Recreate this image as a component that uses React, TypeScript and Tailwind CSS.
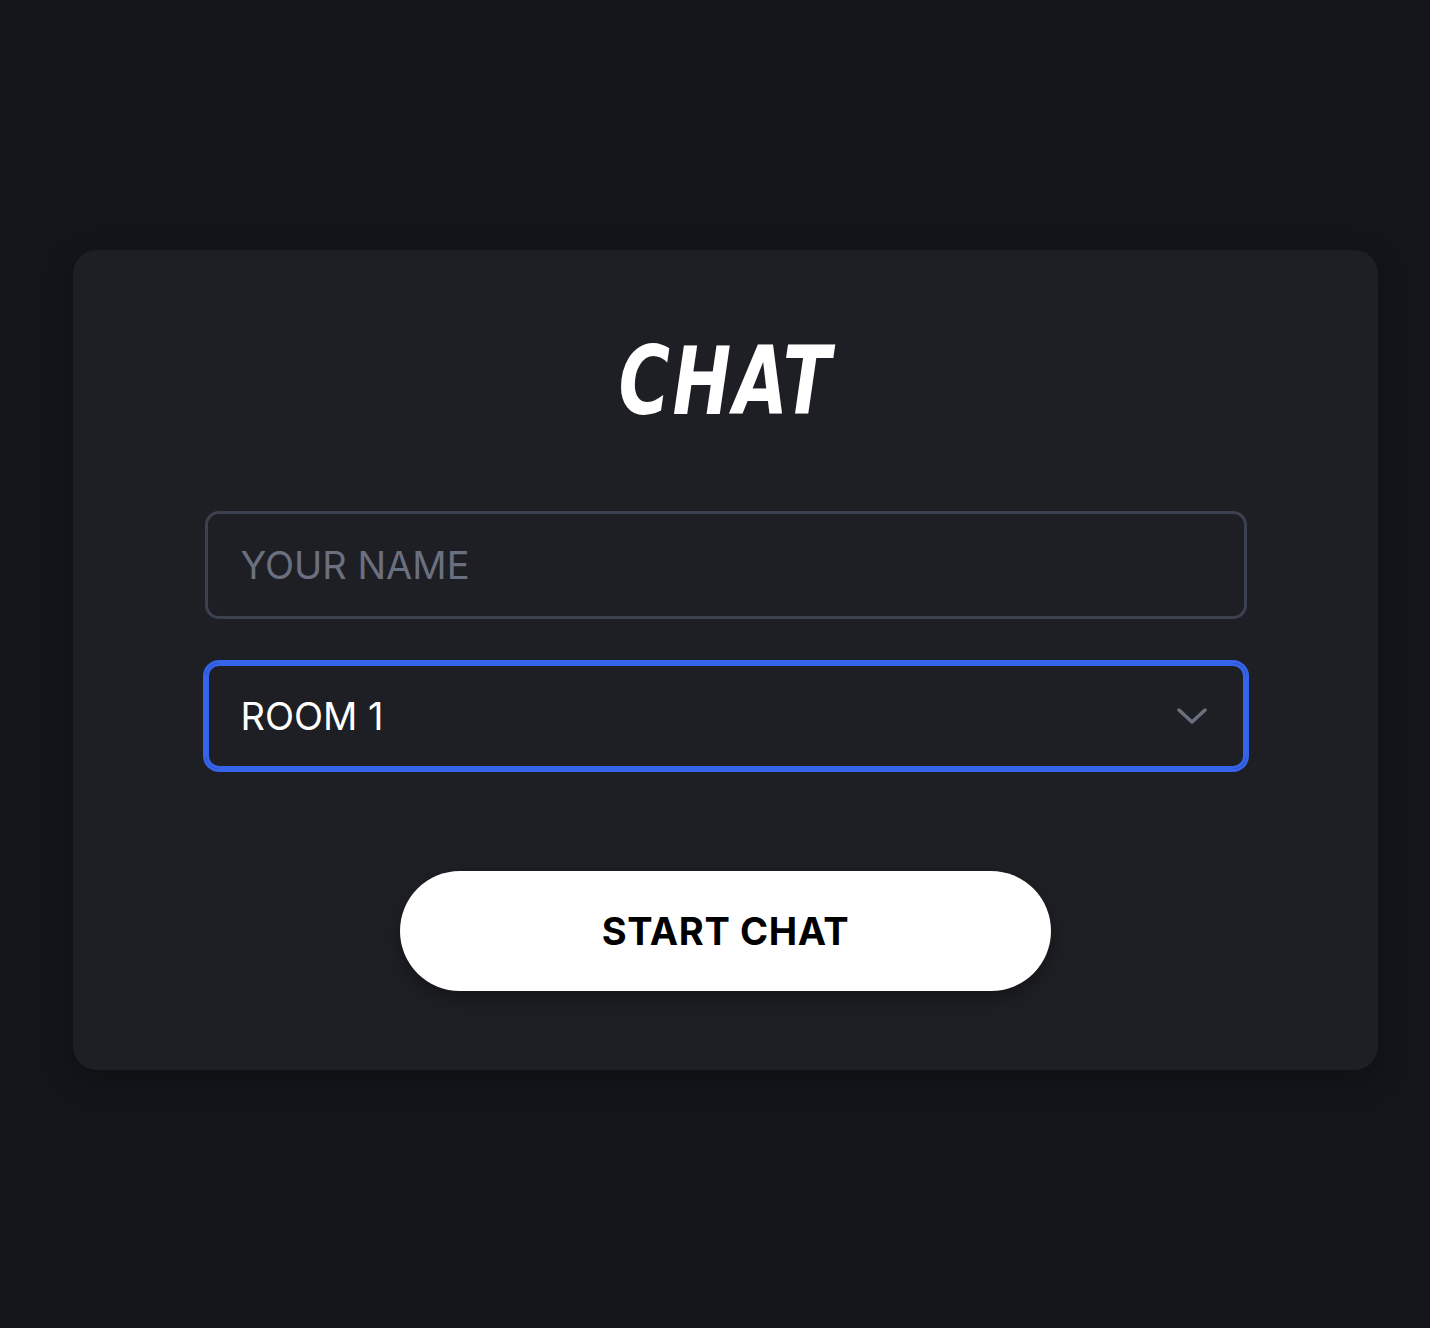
import React from 'react';

export default function App() {
  return (
    <div className="min-h-[1328px] w-full bg-[#14151a] pt-[250px] pl-[73px] font-['Inter','Liberation_Sans',sans-serif]">
      <div className="w-[1305px] h-[820px] rounded-[24px] bg-[#1e1f24] shadow-[0_10px_30px_rgba(0,0,0,0.25)] flex flex-col items-center">
        {/* Title */}
        <h1 className="mt-[76px] h-[110px] flex items-center text-[95px] leading-none font-bold italic text-white tracking-[3px] scale-x-[0.82] font-['DejaVu_Sans_Condensed','DejaVu_Sans',sans-serif]">
          CHAT
        </h1>

        {/* Name + room */}
        <div className="mt-[75px] w-[1046px] flex flex-col items-center">
          <input
            type="text"
            placeholder="YOUR NAME"
            className="w-[1042px] h-[108px] rounded-[14px] border-[3px] border-[#3c4150] bg-transparent pl-[33px] text-[38px] text-white placeholder-[#6b7080] outline-none"
          />
          <div className="relative mt-[44px] w-[1040px] h-[106px] rounded-[13px] border-[3px] border-[#3563e9] ring-[3px] ring-[#3563e9] flex items-center pl-[32px]">
            <span className="text-[38px] text-white">ROOM 1</span>
            <svg
              className="absolute right-[35px] top-1/2 -translate-y-1/2"
              width="32"
              height="20"
              viewBox="0 0 32 20"
              fill="none"
              stroke="#6b7080"
              strokeWidth="3.5"
              strokeLinecap="round"
              strokeLinejoin="round"
            >
              <path d="M3 4 L16 16 L29 4" />
            </svg>
          </div>
        </div>

        {/* Button */}
        <button className="mt-[102px] w-[651px] h-[120px] rounded-full bg-white text-black text-[38px] font-bold tracking-[0.6px] shadow-[0_8px_20px_rgba(0,0,0,0.3)]">
          START CHAT
        </button>
      </div>
    </div>
  );
}
